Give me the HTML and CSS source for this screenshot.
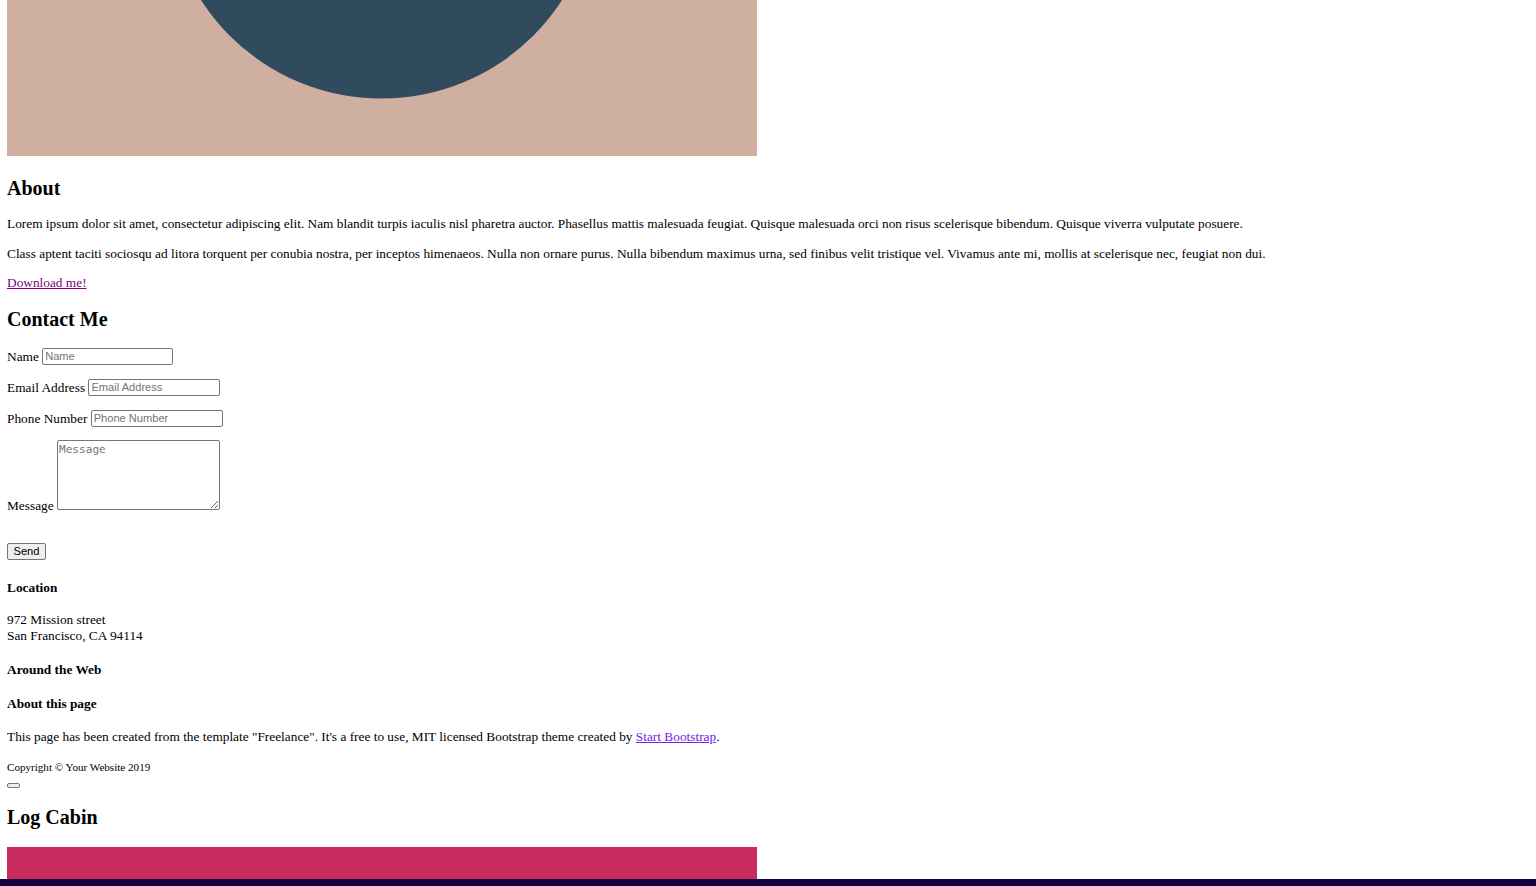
FILE: index.html
```html
<!DOCTYPE html>
<html lang="en">
<head>
<meta charset="utf-8">
<title>Freelance</title>
<link rel="stylesheet" href="styles.css">
</head>
<body>
<section class="portfolio-tail">
  <svg class="art" width="750" height="156" viewBox="0 0 750 156" aria-hidden="true">
    <rect x="0" y="0" width="750" height="156" fill="#cfb0a0"/>
    <circle cx="374.5" cy="-116" r="214.6" fill="#304a5e"/>
  </svg>
</section>

<section class="about">
  <h3 class="about-title">About</h3>
  <p class="text first">Lorem ipsum dolor sit amet, consectetur adipiscing elit. Nam blandit turpis iaculis nisl pharetra auctor. Phasellus mattis malesuada feugiat. Quisque malesuada orci non risus scelerisque bibendum. Quisque viverra vulputate posuere.</p>
  <p class="text">Class aptent taciti sociosqu ad litora torquent per conubia nostra, per inceptos himenaeos. Nulla non ornare purus. Nulla bibendum maximus urna, sed finibus velit tristique vel. Vivamus ante mi, mollis at scelerisque nec, feugiat non dui.</p>
  <p class="text last"><a class="link-visited" href="#">Download me!</a></p>
</section>

<section class="contact">
  <h2 class="contact-title">Contact Me</h2>
  <form class="contact-form" onsubmit="return false">
    <div class="field first"><label for="name">Name</label> <input class="input" id="name" type="text" placeholder="Name"></div>
    <div class="field"><label for="email">Email Address</label> <input class="input wide" id="email" type="email" placeholder="Email Address"></div>
    <div class="field"><label for="phone">Phone Number</label> <input class="input wide" id="phone" type="tel" placeholder="Phone Number"></div>
    <div class="field message"><label for="message">Message</label> <textarea class="textarea" id="message" placeholder="Message"></textarea></div>
    <div class="actions"><button class="send-btn" type="submit">Send</button></div>
  </form>
</section>

<footer class="footer">
  <h4 class="footer-title location">Location</h4>
  <p class="address">972 Mission street<br>San Francisco, CA 94114</p>
  <h4 class="footer-title web">Around the Web</h4>
  <h4 class="footer-title page">About this page</h4>
  <p class="about-page">This page has been created from the template "Freelance". It's a free to use, MIT licensed Bootstrap theme created by <a class="link-bootstrap" href="#">Start Bootstrap</a>.</p>
</footer>

<div class="copyright"><small>Copyright © Your Website 2019</small></div>

<div class="to-top"><button class="to-top-btn" type="button" aria-label="Back to top"></button></div>

<section class="modal">
  <h2 class="modal-title">Log Cabin</h2>
  <div class="cabin"></div>
</section>

<div class="bottom-bar"></div>
</body>
</html>
```

FILE: styles.css
```css
html {
  background: #ffffff;
}

body {
  margin: 0 7px 7px;
  font-family: "Liberation Serif", "Times New Roman", serif;
  font-size: 13.33px;
  line-height: normal;
  color: #000000;
}

.art {
  display: block;
}

.about-title {
  font-size: 20px;
  font-weight: bold;
  margin: 21px 0 0;
}

.text {
  margin: 14.7px 0 0;
}

.text.first {
  margin-top: 15.7px;
}

.text.last {
  margin-top: 13px;
}

.link-visited {
  color: #800080;
  text-decoration: underline;
}

.contact-title {
  font-size: 20px;
  font-weight: bold;
  margin: 16.3px 0 0;
}

.contact-form {
  margin: 0;
}

.field {
  margin: 14px 0 0;
}

.field.first {
  margin-top: 17px;
}

.field.message {
  margin-top: 13px;
}

.input {
  box-sizing: border-box;
  width: 131px;
  height: 17px;
  padding: 1px 2px;
  border: 1px solid #767676;
  border-radius: 2px;
  font-family: "Liberation Sans", Arial, sans-serif;
  font-size: 11.1px;
  color: #000;
  background: #fff;
}

.input.wide {
  width: 132px;
}

.input::placeholder {
  color: #757575;
}

.textarea {
  box-sizing: border-box;
  width: 163px;
  height: 70px;
  padding: 2px 1px;
  border: 1px solid #767676;
  border-radius: 2px;
  font-family: "DejaVu Sans Mono", "Liberation Mono", monospace;
  font-size: 11.1px;
  vertical-align: baseline;
  background: #fff;
}

.textarea::placeholder {
  color: #757575;
}

.actions {
  margin: 29px 0 0;
}

.send-btn {
  display: block;
  box-sizing: border-box;
  width: 39px;
  height: 17px;
  padding: 0;
  border: 1px solid #767676;
  border-radius: 2px;
  background: #efefef;
  font-family: "Liberation Sans", Arial, sans-serif;
  font-size: 11.1px;
  color: #000;
}

.footer-title {
  font-size: 13.33px;
  font-weight: bold;
  margin: 0;
}

.footer-title.location {
  margin-top: 20px;
}

.footer-title.web {
  margin-top: 18.7px;
}

.footer-title.page {
  margin-top: 17.7px;
}

.address {
  margin: 16px 0 0;
}

.about-page {
  margin: 16.7px 0 0;
}

.link-bootstrap {
  color: #7420e6;
  text-decoration: underline;
}

.copyright {
  margin: 14.6px 0 0;
  line-height: 16px;
}

.copyright small {
  font-size: 11.1px;
}

.to-top {
  margin: 8px 0 0;
}

.to-top-btn {
  display: block;
  box-sizing: border-box;
  width: 13px;
  height: 5px;
  padding: 0;
  border: 1px solid #767676;
  border-radius: 2px;
  background: #efefef;
}

.modal-title {
  font-size: 20px;
  font-weight: bold;
  margin: 18px 0 0;
}

.cabin {
  width: 750px;
  height: 420px;
  margin-top: 18px;
  background: #c82b5e;
}

.bottom-bar {
  position: fixed;
  left: 0;
  right: 0;
  bottom: 0;
  height: 7px;
  background: #160040;
}
```
